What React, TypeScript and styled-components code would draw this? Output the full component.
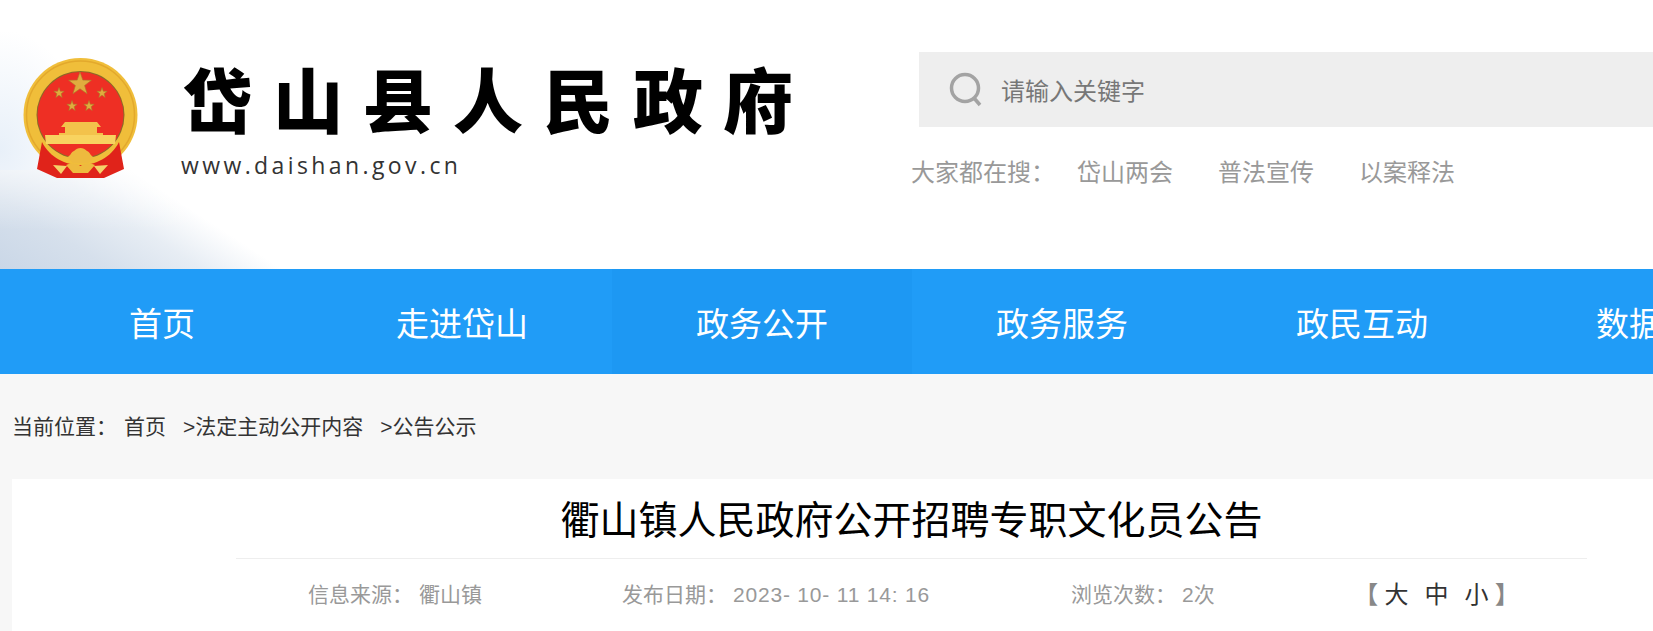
import React, { FC } from 'react';
import styled, { createGlobalStyle } from 'styled-components';

const SansStack = `"Liberation Sans", "Noto Sans CJK SC", sans-serif`;

const GlobalStyle = createGlobalStyle`
  html, body {
    margin: 0;
    padding: 0;
    background: #f7f7f7;
  }
  body {
    font-family: ${SansStack};
    overflow: hidden;
  }
`;

const Page = styled.div`
  width: 100vw;
  height: 631px;
  overflow: hidden;
`;

const Header = styled.header`
  height: 269px;
  display: flex;
  background-color: #fff;
  background-image: linear-gradient(
      180deg,
      rgba(255, 255, 255, 0.55) 0,
      rgba(255, 255, 255, 0) 100%
    ),
    linear-gradient(
      33deg,
      #cad7e7 0,
      #d6e0ec 60px,
      #e7edf4 110px,
      rgba(255, 255, 255, 0) 154px
    ),
    radial-gradient(
      ellipse 90px 120px at 0 150px,
      #e8f0f9 0,
      rgba(255, 255, 255, 0) 100%
    );
  background-size: 290px 60px, 290px 99px, 90px 170px;
  background-position: 0 170px, 0 170px, 0 0;
  background-repeat: no-repeat;
`;

const Logo = styled.div`
  width: 919px;
  flex-shrink: 0;
  display: flex;
  align-items: flex-start;
  padding: 58px 0 0 23px;
  box-sizing: border-box;
`;

const Emblem = styled.svg`
  width: 115px;
  height: 121px;
  flex-shrink: 0;
`;

const LogoText = styled.div`
  margin-left: 45px;
  display: flex;
  flex-direction: column;
`;

const SiteName = styled.div`
  font-family: "Noto Sans CJK SC", sans-serif;
  font-weight: 900;
  font-size: 70px;
  line-height: 80px;
  letter-spacing: 20px;
  white-space: nowrap;
  color: #000;
`;

const SiteUrl = styled.div`
  margin: 14px 0 0 -2px;
  font-family: "Open Sans", sans-serif;
  font-size: 23px;
  line-height: 26px;
  letter-spacing: 3.4px;
  color: #333;
`;

const SearchColumn = styled.div`
  flex: 1;
  min-width: 0;
  padding-top: 52px;
`;

const SearchBox = styled.div`
  height: 75px;
  display: flex;
  align-items: center;
  padding-left: 29px;
  background: #eeeeee;
`;

const SearchIcon = styled.svg`
  width: 36px;
  height: 36px;
  flex-shrink: 0;
`;

const Placeholder = styled.span`
  margin-left: 17px;
  font-size: 24px;
  color: #777;
`;

const HotRow = styled.div`
  display: flex;
  margin: 28px 0 0 -8px;
  font-size: 24px;
  line-height: 36px;
  color: #999;
`;

const HotLabel = styled.span`
  width: 166px;
`;

const HotLink = styled.a`
  margin-right: 45px;
  color: #999;
`;

const Nav = styled.nav`
  height: 105px;
  display: flex;
  padding-left: 12px;
  background: #209cf7;
`;

const NavItem = styled.a<{ $active?: boolean }>`
  width: 300px;
  flex-shrink: 0;
  display: flex;
  align-items: center;
  justify-content: center;
  font-family: "Noto Sans CJK SC", sans-serif;
  font-weight: 400;
  font-size: 33px;
  color: #fff;
  background: ${({ $active }) => ($active ? '#1d98f3' : 'transparent')};
`;

const Breadcrumb = styled.div`
  height: 105px;
  box-sizing: border-box;
  padding: 0 0 3px 12px;
  display: flex;
  align-items: center;
  font-size: 21px;
  color: #333;
`;

const CrumbLabel = styled.span`
  width: 112px;
`;

const Crumb = styled.a`
  margin-right: 17px;
  color: #333;
`;

const Card = styled.main`
  margin-left: 12px;
  height: 152px;
  padding-left: 224px;
  background: #fff;
`;

const Article = styled.div`
  width: 1351px;
`;

const Title = styled.h1`
  margin: 0;
  height: 79px;
  line-height: 77px;
  text-align: center;
  font-family: "Noto Sans CJK SC", sans-serif;
  font-weight: 400;
  font-size: 39px;
  color: #000;
  border-bottom: 1px solid #eeeeee;
`;

const Meta = styled.div`
  display: grid;
  grid-template-columns: 314px 449px 283px auto;
  padding: 18px 0 0 72px;
  font-size: 21px;
  line-height: 36px;
  color: #999;
`;

const MetaValue = styled.span`
  margin-left: 6px;
`;

const DateValue = styled(MetaValue)`
  letter-spacing: 0.8px;
`;

const FontSizes = styled.div`
  display: flex;
  justify-content: space-between;
  width: 165px;
  font-size: 24px;
  color: #333;
`;

const SizeOptions = styled.div`
  display: flex;
  gap: 16px;
`;

const Bracket = styled.span`
  color: #888;
  font-weight: 700;
`;

const navItems = ['首页', '走进岱山', '政务公开', '政务服务', '政民互动', '数据开放'];
const hotWords = ['岱山两会', '普法宣传', '以案释法'];
const sizeOptions = ['大', '中', '小'];

const star = (cx: number, cy: number, r: number) => {
  const points: string[] = [];
  for (let i = 0; i < 10; i++) {
    const radius = i % 2 === 0 ? r : r * 0.4;
    const angle = (Math.PI / 5) * i - Math.PI / 2;
    points.push(`${(cx + radius * Math.cos(angle)).toFixed(1)},${(cy + radius * Math.sin(angle)).toFixed(1)}`);
  }
  return points.join(' ');
};

const NationalEmblem: FC = () => (
  <Emblem viewBox="0 0 115 121">
    <circle cx="57.5" cy="57" r="57" fill="#f0be3a" />
    <circle cx="57.5" cy="57" r="54" fill="none" stroke="#e3a92c" strokeWidth="1.5" />
    <circle cx="57.5" cy="57" r="44" fill="#8a6a28" />
    <circle cx="57.5" cy="57" r="43" fill="#ee2f24" />
    <g fill="#e0ac3e" stroke="#a97a2a" strokeWidth="0.6">
      <polygon points={star(57, 26, 12)} />
      <polygon points={star(36, 35, 5.5)} />
      <polygon points={star(79, 35, 5.5)} />
      <polygon points={star(49, 48, 5.5)} />
      <polygon points={star(66, 48, 5.5)} />
    </g>
    <path d="M42 64h32l4 5h-4v6h6v2H36v-2h6v-6h-4z" fill="#f3c24b" />
    <path d="M22 77h71l-1 9H23z" fill="#f8d360" />
    <path d="M19 84L14 111L34 120H81L101 111L96 84C88 100 72 107 57.500 107C43 107 27 100 19 84Z" fill="#e0231a" />
    <path d="M44 99c3 0 4-5 7-6 2-2 4-3 6.500-3s4.500 1 6.500 3c3 1 4 6 7 6l-6 6H50z" fill="#eeba3e" />
    <path d="M30 107l14 1-6 8zM85 107l-14 1 6 8z" fill="#f5d26a" />
    <path d="M43 107c5-2 10-2 14.500 1 4.500-3 9.500-3 14.500-1l-7 8H50z" fill="#eeba3e" />
  </Emblem>
);

const App: FC = () => (
  <Page>
    <GlobalStyle />
    <Header>
      <Logo>
        <NationalEmblem />
        <LogoText>
          <SiteName>岱山县人民政府</SiteName>
          <SiteUrl>www.daishan.gov.cn</SiteUrl>
        </LogoText>
      </Logo>
      <SearchColumn>
        <SearchBox>
          <SearchIcon viewBox="0 0 36 36" fill="none" stroke="#a3a3a3">
            <circle cx="17" cy="16" r="13.500" strokeWidth="3.500" />
            <path d="M26 26l6 7" strokeWidth="3.500" />
          </SearchIcon>
          <Placeholder>请输入关键字</Placeholder>
        </SearchBox>
        <HotRow>
          <HotLabel>大家都在搜：</HotLabel>
          {hotWords.map(word => (
            <HotLink key={word}>{word}</HotLink>
          ))}
        </HotRow>
      </SearchColumn>
    </Header>
    <Nav>
      {navItems.map(item => (
        <NavItem key={item} $active={item === '政务公开'}>
          {item}
        </NavItem>
      ))}
    </Nav>
    <Breadcrumb>
      <CrumbLabel>当前位置：</CrumbLabel>
      <Crumb>首页</Crumb>
      <Crumb>&gt;法定主动公开内容</Crumb>
      <Crumb>&gt;公告公示</Crumb>
    </Breadcrumb>
    <Card>
      <Article>
        <Title>衢山镇人民政府公开招聘专职文化员公告</Title>
        <Meta>
          <span>
            信息来源：<MetaValue>衢山镇</MetaValue>
          </span>
          <span>
            发布日期：<DateValue>2023- 10- 11 14: 16</DateValue>
          </span>
          <span>
            浏览次数：<MetaValue>2次</MetaValue>
          </span>
          <FontSizes>
            <Bracket>【</Bracket>
            <SizeOptions>
              {sizeOptions.map(size => (
                <span key={size}>{size}</span>
              ))}
            </SizeOptions>
            <Bracket>】</Bracket>
          </FontSizes>
        </Meta>
      </Article>
    </Card>
  </Page>
);

export default App;
